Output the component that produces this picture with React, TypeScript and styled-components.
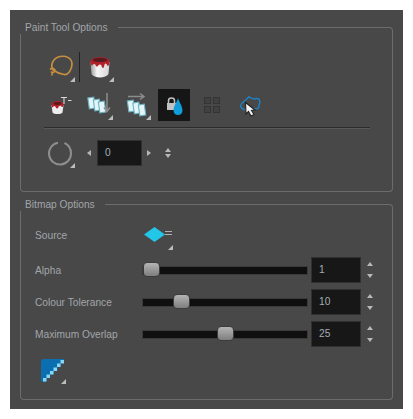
import React from "react";
import styled, { createGlobalStyle } from "styled-components";

const GlobalStyle = createGlobalStyle`
    html, body {
        margin: 0;
        padding: 0;
        background: #ffffff;
    }
`;

const LassoIcon = () => (
    <svg width="32" height="32" viewBox="0 0 32 32" fill="none">
        <path
            d="M9 19C6 14 9 7 16 5.500C22 4.500 28 7 28 13C28 19 24 24 20 23.500C16 23 12 21 9 19Z"
            stroke="#c58f3f"
            strokeWidth="1.700"
        />
        <path d="M6 18.500C8 16.500 11 17.500 11 19.500C11 21.500 8 22 7 20.500M9 21C8.500 22.500 8 23.500 7.500 24.500" stroke="#c58f3f" strokeWidth="1.600" />
    </svg>
);

const BigBucketIcon = () => (
    <svg width="32" height="32" viewBox="0 0 32 32" fill="none">
        <defs>
            <linearGradient id="canBig" x1="0" x2="1" y1="0" y2="0">
                <stop offset="0" stopColor="#9a9a9a" />
                <stop offset="0.35" stopColor="#f6f6f6" />
                <stop offset="1" stopColor="#d4d4d4" />
            </linearGradient>
        </defs>
        <path d="M7.500 11L8.500 23C11 27.500 23 27.500 25.500 23L26.500 11Z" fill="url(#canBig)" />
        <path d="M7.500 10C8 5 26 5 26.500 10C26.500 12 26 15 25 15C24 15 24 12.500 22.500 12.500C21 12.500 21.500 17 20 17C18.500 17 19 13.500 17 13.500C15 13.500 15.500 15.500 14 15.500C12.500 15.500 13 13 11 13C9.500 13 9.500 15 8.500 14.500C8 14 7.500 12 7.500 10Z" fill="#b3202a" />
        <ellipse cx="17" cy="9" rx="7.500" ry="2.200" fill="#5a1a1e" />
    </svg>
);

const SmallBucketIcon = () => (
    <svg width="32" height="32" viewBox="0 0 32 32" fill="none">
        <path d="M7.500 16L8.500 23.500C10 25.500 17 25.500 18.500 23.500L19.500 16Z" fill="#ededed" />
        <path d="M7.500 15C8 11 19 11 19.500 15C19.500 16.500 19 18.500 18 18C17 17.500 17 16.500 15.500 17C14 17.500 14.500 19.500 13 19.500C11.500 19.500 12 17 10.500 17C9 17 9 19 8.500 18.500C8 18 7.500 16.500 7.500 15Z" fill="#b3202a" />
        <ellipse cx="13.500" cy="14.500" rx="4" ry="1.400" fill="#5a1a1e" />
        <path d="M17 8.500H23M20 8.500V15M24 11.500H27.500" stroke="#d8d8d8" strokeWidth="1.100" />
    </svg>
);

const Card = ({ x, y }: { x: number; y: number }) => (
    <rect
        x={x}
        y={y}
        width="6"
        height="11"
        fill="#e2f6fa"
        stroke="#6fb2bf"
        strokeWidth="1.100"
        transform={`rotate(-8 ${x + 3} ${y + 5})`}
    />
);

const StackDownIcon = () => (
    <svg width="32" height="32" viewBox="0 0 32 32" fill="none">
        <Card x={6.500} y={8.500} />
        <Card x={12} y={10.500} />
        <Card x={17} y={12.500} />
        <path d="M25 4V22M22 18.500L25 22.500L28 18.500" stroke="#8c8c8c" strokeWidth="1.500" />
    </svg>
);

const StackRightIcon = () => (
    <svg width="32" height="32" viewBox="0 0 32 32" fill="none">
        <Card x={8} y={11.500} />
        <Card x={13.500} y={13.500} />
        <Card x={19} y={15.500} />
        <path d="M8 7.500H23.500M20 4.500L24 7.500L20 10.500" stroke="#8c8c8c" strokeWidth="1.500" />
    </svg>
);

const LockDropIcon = () => (
    <svg width="32" height="32" viewBox="0 0 32 32" fill="none">
        <rect x="9" y="14" width="9" height="7" fill="#c2c2c2" />
        <path d="M10.500 14V11.500C10.500 8 16.500 8 16.500 11.500V14" stroke="#c2c2c2" strokeWidth="1.500" />
        <path d="M20 9C21 13 24.500 17 24.500 21.500C24.500 27.500 15.500 27.500 15.500 21.500C15.500 17 19 13 20 9Z" fill="#0f9ddb" />
    </svg>
);

const GridIcon = () => (
    <svg width="32" height="32" viewBox="0 0 32 32" fill="#414141" stroke="#343434">
        <rect x="8.500" y="8.500" width="6" height="6" />
        <rect x="17.500" y="8.500" width="6" height="6" />
        <rect x="8.500" y="17.500" width="6" height="6" />
        <rect x="17.500" y="17.500" width="6" height="6" />
    </svg>
);

const SelectIcon = () => (
    <svg width="32" height="32" viewBox="0 0 32 32" fill="none">
        <path
            d="M6.500 17C7.500 12.500 12 12 14.500 8C17 8 19 11.500 22 9.500C26.500 9 26.500 14 25 16C25.500 19 23 20.500 21 19.500C17 23 13 21.500 10 20.500C8.500 20 7 19 6.500 17Z"
            stroke="#1b87cc"
            strokeWidth="1.300"
        />
        <path d="M11.500 13.500L12 25L14.500 22.500L17 27L20 25.500L17.500 21.500L21 21Z" fill="#f2f2f2" stroke="#222222" strokeWidth="1.100" />
    </svg>
);

const RingIcon = () => (
    <svg width="32" height="32" viewBox="0 0 32 32" fill="none">
        <path d="M20.500 6C25 8 27 12 27 16.500A11 11 0 1 1 14 5.700" stroke="#8e8e8e" strokeWidth="2" />
    </svg>
);

const DiamondIcon = () => (
    <svg width="32" height="32" viewBox="0 0 32 32" fill="none">
        <path d="M2 15.500L12.500 8L23 15.500L12.500 23Z" fill="#22c7e8" />
        <path d="M23 12.500H30M23 15.500H30" stroke="#b0b0b0" strokeWidth="1.200" />
    </svg>
);

const StaircaseIcon = () => (
    <svg width="32" height="32" viewBox="0 0 32 32" fill="none">
        <path d="M6 9C6 7 7 6 9 6H29V10H26V14H22.500V18H19V21.500H15V25H11.500V29H8C7 29 6 28 6 27Z" fill="#0a6eb0" />
        <g fill="#86d6f5">
            <rect x="25.500" y="7" width="3.500" height="3.500" />
            <rect x="22" y="10.500" width="3.500" height="3.500" />
            <rect x="18.500" y="14.500" width="3.500" height="3.500" />
            <rect x="15" y="18" width="3.500" height="3.500" />
            <rect x="11.500" y="21.500" width="3.500" height="3.500" />
            <rect x="8" y="25" width="3.500" height="3.500" />
        </g>
    </svg>
);

const sliders = [
    { label: "Alpha", value: 1, thumb: 0 },
    { label: "Colour Tolerance", value: 10, thumb: 30 },
    { label: "Maximum Overlap", value: 25, thumb: 74 },
];

const App = () => {
    return (
        <>
            <GlobalStyle />
            <Panel>
                <Group>
                    <GroupHeader>
                        <GroupTitle>Paint Tool Options</GroupTitle>
                        <HeaderRule />
                    </GroupHeader>
                    <PaintBody>
                        <IconRow>
                            <IconButton $menu>
                                <LassoIcon />
                            </IconButton>
                            <ToolSeparator />
                            <IconButton $menu>
                                <BigBucketIcon />
                            </IconButton>
                        </IconRow>
                        <IconRow>
                            <IconButton>
                                <SmallBucketIcon />
                            </IconButton>
                            <IconButton $menu>
                                <StackDownIcon />
                            </IconButton>
                            <IconButton $menu>
                                <StackRightIcon />
                            </IconButton>
                            <IconButton $active>
                                <LockDropIcon />
                            </IconButton>
                            <IconButton>
                                <GridIcon />
                            </IconButton>
                            <IconButton>
                                <SelectIcon />
                            </IconButton>
                        </IconRow>
                        <RowDivider />
                        <StepRow>
                            <IconButton $menu>
                                <RingIcon />
                            </IconButton>
                            <StepArrow $dir="left" />
                            <NumberBox $w={45} $h={26}>
                                0
                            </NumberBox>
                            <StepArrow $dir="right" />
                            <UpDown>
                                <SpinUp />
                                <SpinDown />
                            </UpDown>
                        </StepRow>
                    </PaintBody>
                </Group>
                <Group>
                    <GroupHeader>
                        <GroupTitle>Bitmap Options</GroupTitle>
                        <HeaderRule />
                    </GroupHeader>
                    <BitmapBody>
                        <SliderRow>
                            <FieldLabel>Source</FieldLabel>
                            <IconButton $menu>
                                <DiamondIcon />
                            </IconButton>
                        </SliderRow>
                        {sliders.map((s) => (
                            <SliderRow key={s.label}>
                                <FieldLabel>{s.label}</FieldLabel>
                                <Track>
                                    <Thumb $left={s.thumb} />
                                </Track>
                                <NumberBox $w={50} $h={26}>
                                    {s.value}
                                </NumberBox>
                                <Spinner>
                                    <SpinUp />
                                    <SpinDown />
                                </Spinner>
                            </SliderRow>
                        ))}
                        <IconButton $menu>
                            <StaircaseIcon />
                        </IconButton>
                    </BitmapBody>
                </Group>
            </Panel>
        </>
    );
};

const Panel = styled.div`
    width: 373px;
    height: 379px;
    margin: 10px;
    padding: 10px;
    display: flex;
    flex-direction: column;
    gap: 5px;
    background-color: #484848;
    font-family: "Liberation Sans", Arial, sans-serif;
`;

const Group = styled.section`
    display: flex;
    flex-direction: column;
`;

const GroupHeader = styled.div`
    display: flex;
    height: 14px;
    padding-left: 5px;
    gap: 10px;
`;

const GroupTitle = styled.div`
    font-size: 10.200px;
    line-height: 15px;
    color: #a2a6aa;
    white-space: nowrap;
`;

const HeaderRule = styled.div`
    flex: 1;
    margin-top: 7px;
    border-top: 1px solid #6c6c6c;
    border-right: 1px solid #6c6c6c;
    border-top-right-radius: 4px;
`;

const GroupBody = styled.div`
    display: flex;
    flex-direction: column;
    border: 1px solid #6c6c6c;
    border-top: none;
    border-radius: 0 0 4px 4px;
`;

const PaintBody = styled(GroupBody)`
    height: 158px;
    box-sizing: border-box;
    padding: 17px 0 0 23px;
    gap: 6px;
`;

const BitmapBody = styled(GroupBody)`
    height: 189px;
    box-sizing: border-box;
    padding: 8px 0 0 14px;
    gap: 6px;
`;

const IconRow = styled.div`
    display: flex;
    gap: 6px;
`;

const IconButton = styled.div<{ $menu?: boolean; $active?: boolean }>`
    position: relative;
    flex: none;
    width: 32px;
    height: 32px;
    background-color: ${({ $active }) => ($active ? "#161616" : "transparent")};

    svg {
        display: block;
    }

    &::after {
        content: "";
        display: ${({ $menu }) => ($menu ? "block" : "none")};
        position: absolute;
        right: 1px;
        bottom: 1px;
        border-style: solid;
        border-width: 0 0 5px 5px;
        border-color: transparent transparent #bdbdbd transparent;
    }
`;

const ToolSeparator = styled.div`
    width: 1px;
    height: 30px;
    margin: 1px -3px 0 -3px;
    background-color: #222222;
`;

const RowDivider = styled.div`
    width: 326px;
    height: 1px;
    background-color: #2c2c2c;
    border-bottom: 1px solid #585858;
    box-sizing: content-box;
    margin-bottom: 2px;
`;

const StepRow = styled.div`
    display: flex;
    align-items: center;
`;

const StepArrow = styled.div<{ $dir: "left" | "right" }>`
    width: 0;
    height: 0;
    margin: ${({ $dir }) => ($dir === "left" ? "0 6px 0 11px" : "0 14px 0 5px")};
    border-style: solid;
    border-width: 3px 0 3px 0;
    border-color: transparent #b8b8b8;
    ${({ $dir }) => ($dir === "left" ? "border-right-width: 4px;" : "border-left-width: 4px;")}
`;

const NumberBox = styled.div<{ $w: number; $h: number }>`
    flex: none;
    box-sizing: border-box;
    width: ${({ $w }) => $w}px;
    height: ${({ $h }) => $h}px;
    padding-left: 7px;
    background-color: #171717;
    border: 1px solid #303030;
    font-size: 10.200px;
    line-height: 24px;
    color: #a2aeb8;
`;

const SliderRow = styled.div`
    display: grid;
    grid-template-columns: 104px 166px 50px 10px;
    align-items: center;
    column-gap: 3px;
    min-height: 26px;
`;

const FieldLabel = styled.div`
    font-size: 10.200px;
    color: #a2a6aa;
    white-space: nowrap;
`;

const Track = styled.div`
    position: relative;
    box-sizing: border-box;
    height: 9px;
    background-color: #0f0f0f;
    border: 1px solid #3a3a3a;
`;

const Thumb = styled.div<{ $left: number }>`
    position: absolute;
    left: ${({ $left }) => $left}px;
    top: -5px;
    width: 17px;
    height: 15px;
    border-radius: 4px;
    background: linear-gradient(#b4b4b4, #7e7e7e);
    border: 1px solid #3c3c3c;
    box-sizing: border-box;
`;

const Spinner = styled.div`
    display: flex;
    flex-direction: column;
    align-items: center;
    gap: 8px;
    margin-left: 1px;
`;

const UpDown = styled.div`
    display: flex;
    flex-direction: column;
    align-items: center;
    gap: 2px;
`;

const SpinUp = styled.div`
    width: 0;
    height: 0;
    border-style: solid;
    border-width: 0 3px 4px 3px;
    border-color: transparent transparent #b8b8b8 transparent;
`;

const SpinDown = styled.div`
    width: 0;
    height: 0;
    border-style: solid;
    border-width: 4px 3px 0 3px;
    border-color: #b8b8b8 transparent transparent transparent;
`;

export default App;
